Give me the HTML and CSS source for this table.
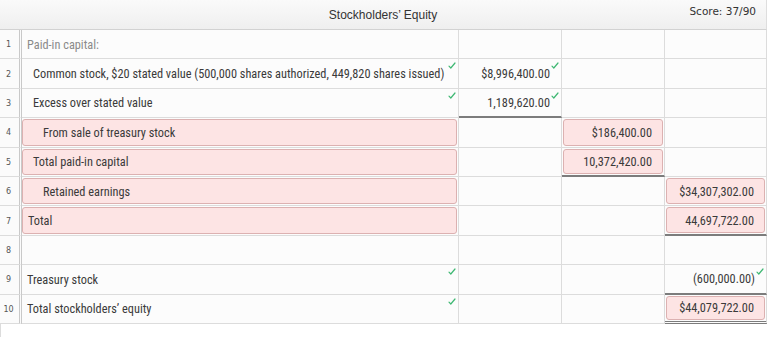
FILE: index.html
```html
<!DOCTYPE html>
<html>
<head>
<meta charset="utf-8">
<link rel="stylesheet" href="styles.css">
</head>
<body>
<div class="sheet">
  <div class="head">
    <span class="title">Stockholders’ Equity</span>
    <span class="score">Score: 37/90</span>
  </div>
  <div class="grid">
    <div class="row">
      <div class="num">1</div>
      <div class="cell label"><span class="txt muted">Paid-in capital:</span></div>
      <div class="cell"></div><div class="cell"></div><div class="cell"></div>
    </div>
    <div class="row">
      <div class="num">2</div>
      <div class="cell label"><span class="txt l1">Common stock, $20 stated value (500,000 shares authorized, 449,820 shares issued)</span><svg class="chk" viewBox="0 0 8 7"><path d="M1 4.2 L2.8 6 L7 1"/></svg></div>
      <div class="cell amt"><span class="val">$8,996,400.00</span><svg class="chk" viewBox="0 0 8 7"><path d="M1 4.2 L2.8 6 L7 1"/></svg></div>
      <div class="cell"></div><div class="cell"></div>
    </div>
    <div class="row">
      <div class="num">3</div>
      <div class="cell label"><span class="txt l1">Excess over stated value</span><svg class="chk" viewBox="0 0 8 7"><path d="M1 4.2 L2.8 6 L7 1"/></svg></div>
      <div class="cell amt ul"><span class="val">1,189,620.00</span><svg class="chk" viewBox="0 0 8 7"><path d="M1 4.2 L2.8 6 L7 1"/></svg></div>
      <div class="cell"></div><div class="cell"></div>
    </div>
    <div class="row">
      <div class="num">4</div>
      <div class="cell label"><div class="box"><span class="txt l2">From sale of treasury stock</span></div></div>
      <div class="cell"></div>
      <div class="cell amt"><div class="box"><span class="val">$186,400.00</span></div></div>
      <div class="cell"></div>
    </div>
    <div class="row">
      <div class="num">5</div>
      <div class="cell label"><div class="box"><span class="txt l1">Total paid-in capital</span></div></div>
      <div class="cell"></div>
      <div class="cell amt ul"><div class="box"><span class="val">10,372,420.00</span></div></div>
      <div class="cell"></div>
    </div>
    <div class="row">
      <div class="num">6</div>
      <div class="cell label"><div class="box"><span class="txt l2">Retained earnings</span></div></div>
      <div class="cell"></div><div class="cell"></div>
      <div class="cell amt"><div class="box"><span class="val">$34,307,302.00</span></div></div>
    </div>
    <div class="row">
      <div class="num">7</div>
      <div class="cell label"><div class="box"><span class="txt">Total</span></div></div>
      <div class="cell"></div><div class="cell"></div>
      <div class="cell amt ul"><div class="box"><span class="val">44,697,722.00</span></div></div>
    </div>
    <div class="row">
      <div class="num">8</div>
      <div class="cell label"></div>
      <div class="cell"></div><div class="cell"></div><div class="cell"></div>
    </div>
    <div class="row">
      <div class="num">9</div>
      <div class="cell label"><span class="txt">Treasury stock</span><svg class="chk" viewBox="0 0 8 7"><path d="M1 4.2 L2.8 6 L7 1"/></svg></div>
      <div class="cell"></div><div class="cell"></div>
      <div class="cell amt ul"><span class="val">(600,000.00)</span><svg class="chk" viewBox="0 0 8 7"><path d="M1 4.2 L2.8 6 L7 1"/></svg></div>
    </div>
    <div class="row">
      <div class="num">10</div>
      <div class="cell label"><span class="txt">Total stockholders’ equity</span><svg class="chk" viewBox="0 0 8 7"><path d="M1 4.2 L2.8 6 L7 1"/></svg></div>
      <div class="cell"></div><div class="cell"></div>
      <div class="cell amt dbl"><div class="box"><span class="val">$44,079,722.00</span></div></div>
    </div>
  </div>
  <div class="tail"></div>
</div>
</body>
</html>
```
FILE: styles.css
```css
* { box-sizing: border-box; }
html, body { margin: 0; padding: 0; background: #fff; }
body {
  font-family: "Liberation Sans", Arial, sans-serif;
  color: #333;
}
.sheet { width: 767px; }
.head {
  height: 30px;
  position: relative;
  display: flex;
  justify-content: center;
  align-items: center;
  background: linear-gradient(#fafafa, #efefef);
  border-bottom: 1px solid #d2d2d2;
  border-right: 1px solid #dedede;
}
.title { font-family: "Liberation Sans", Arial, sans-serif; font-size: 12px; color: #333; }
.score {
  position: absolute; right: 10px; top: 5px;
  font-family: "DejaVu Sans", Verdana, sans-serif; font-size: 10.5px; color: #333;
}
.row { display: grid; grid-template-columns: 22px 437px 103px 103px 102px; height: 29.4px; }
.num {
  border-right: 3px double #c9c9c9; border-bottom: 1px solid #dcdcdc; background: #fbfbfb;
  font-size: 8px; font-family: "DejaVu Sans", sans-serif; color: #555;
  display: flex; align-items: center; justify-content: center; padding-right: 2px; padding-top: 1px;
}
.cell {
  position: relative; border-right: 1px solid #dcdcdc; border-bottom: 1px solid #dcdcdc;
  background: #fcfcfc; display: flex; align-items: center;
  font-family: "Roboto", "Liberation Sans", sans-serif;
  font-stretch: 75%;
  font-size: 12.3px;
  color: #3a3a3a;
}
.txt, .val { padding-top: 1px; }
.cell.amt { justify-content: flex-end; }
.cell.ul { border-bottom: 2px solid #7c7c7c; }
.cell.dbl { border-bottom: 3px double #7c7c7c; }
.txt { padding-left: 5px; white-space: nowrap; }
.txt.l1 { padding-left: 11px; }
.txt.l2 { padding-left: 21px; }
.txt.muted { color: #8a8a8a; }
.box .txt { padding-left: 5px; }
.box .txt.l1 { padding-left: 10px; }
.box .txt.l2 { padding-left: 20px; }
.val { padding-right: 11px; white-space: nowrap; }
.box {
  align-self: stretch; flex: 1; margin: 1px; background: #fde4e4;
  border: 1px solid #dcb1b1; border-radius: 3px; display: flex; align-items: center;
}
.label .box { margin-left: 0; }
.amt .box { justify-content: flex-end; }
.box .val { padding-right: 10px; }
.chk {
  position: absolute; top: 3px; right: 2px; width: 8px; height: 7px; fill: none;
  stroke: #3fb873; stroke-width: 1.2; stroke-linecap: round; stroke-linejoin: round;
}
.tail { height: 20px; border-left: 1px solid #dcdcdc; }
```
